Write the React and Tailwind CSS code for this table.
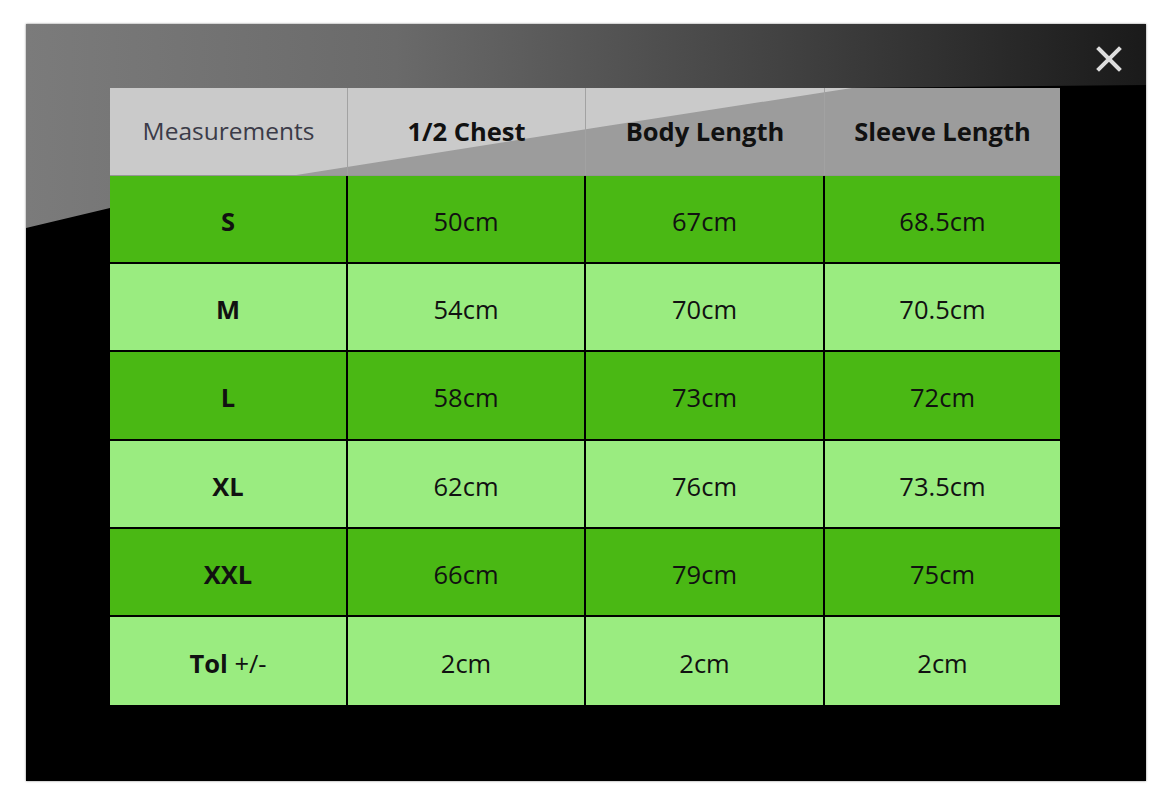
import React from 'react';

const headers = ['Measurements', '1/2 Chest', 'Body Length', 'Sleeve Length'];

const rows = [
  { size: 'S', values: ['50cm', '67cm', '68.5cm'] },
  { size: 'M', values: ['54cm', '70cm', '70.5cm'] },
  { size: 'L', values: ['58cm', '73cm', '72cm'] },
  { size: 'XL', values: ['62cm', '76cm', '73.5cm'] },
  { size: 'XXL', values: ['66cm', '79cm', '75cm'] },
  { size: 'Tol', suffix: ' +/-', values: ['2cm', '2cm', '2cm'] },
];

const widths = ['w-[238px]', 'w-[238px]', 'w-[239px]', 'w-[235px]'];

const CloseIcon = () => (
  <svg width="26" height="26" viewBox="0 0 26 26" fill="none">
    <path d="M3 3 L23 23 M23 3 L3 23" stroke="#dedede" strokeWidth="4" strokeLinecap="square" />
  </svg>
);

const SizeChart = () => {
  return (
    <div className="relative ml-[26px] mt-[24px] w-[1120px] h-[757px] bg-black shadow-[0_0_2px_rgba(0,0,0,0.5)] overflow-hidden">
      {/* gloss */}
      <div className="absolute inset-0 bg-[linear-gradient(to_right,#7b7b7b,#6a6a6a_33%,#404040_69%,#1a1a1a)] [clip-path:polygon(0_0,1120px_0,1120px_61px,826px_64px,800px_68px,574px_103px,264px_152px,84px_184px,0_204px)]"></div>

      <button className="absolute top-[22px] right-[24px] z-20">
        <CloseIcon />
      </button>

      <div className="relative z-10 pt-[64px] pl-[84px] font-['Open_Sans',sans-serif]">
        <div className="w-[950px]">
          {/* header */}
          <div className="relative flex h-[88px] bg-[#9c9c9c] border-b border-[#959595]">
            <div className="absolute inset-0 bg-[#cacaca] [clip-path:polygon(0_0,742px_0,716px_4px,490px_39px,180px_88px,0_88px)]"></div>
            {headers.map((h, i) => (
              <div
                key={h}
                className={`relative flex items-center justify-center ${widths[i]} ${i < 3 ? 'border-r border-[#a2a2a2]' : ''} ${i === 0 ? 'text-[24.5px] font-normal text-[#3b3b48]' : 'text-[25.5px] font-bold text-[#111]'}`}
              >
                {h}
              </div>
            ))}
          </div>

          {/* body */}
          {rows.map((r, ri) => (
            <div
              key={r.size}
              className={`flex ${ri === 2 ? 'h-[89px]' : 'h-[88px]'} ${ri < rows.length - 1 ? 'border-b-2 border-black' : ''} ${ri % 2 === 0 ? 'bg-[#4ab814]' : 'bg-[#9aec80]'}`}
            >
              <div className={`flex items-center justify-center pt-1 text-[25.5px] text-[#111] border-r-2 border-black ${widths[0]}`}>
                <span className="font-bold">{r.size}</span>
                {r.suffix && <span className="whitespace-pre">{r.suffix}</span>}
              </div>
              {r.values.map((v, vi) => (
                <div
                  key={vi}
                  className={`flex items-center justify-center pt-1 text-[25.5px] text-[#111] ${widths[vi + 1]} ${vi < 2 ? 'border-r-2 border-black' : ''}`}
                >
                  {v}
                </div>
              ))}
            </div>
          ))}
        </div>
      </div>
    </div>
  );
};

export default function App() {
  return (
    <div className="w-[1175px] h-[812px] bg-white overflow-hidden">
      <div className="pt-px -mt-px">
        <SizeChart />
      </div>
    </div>
  );
}
